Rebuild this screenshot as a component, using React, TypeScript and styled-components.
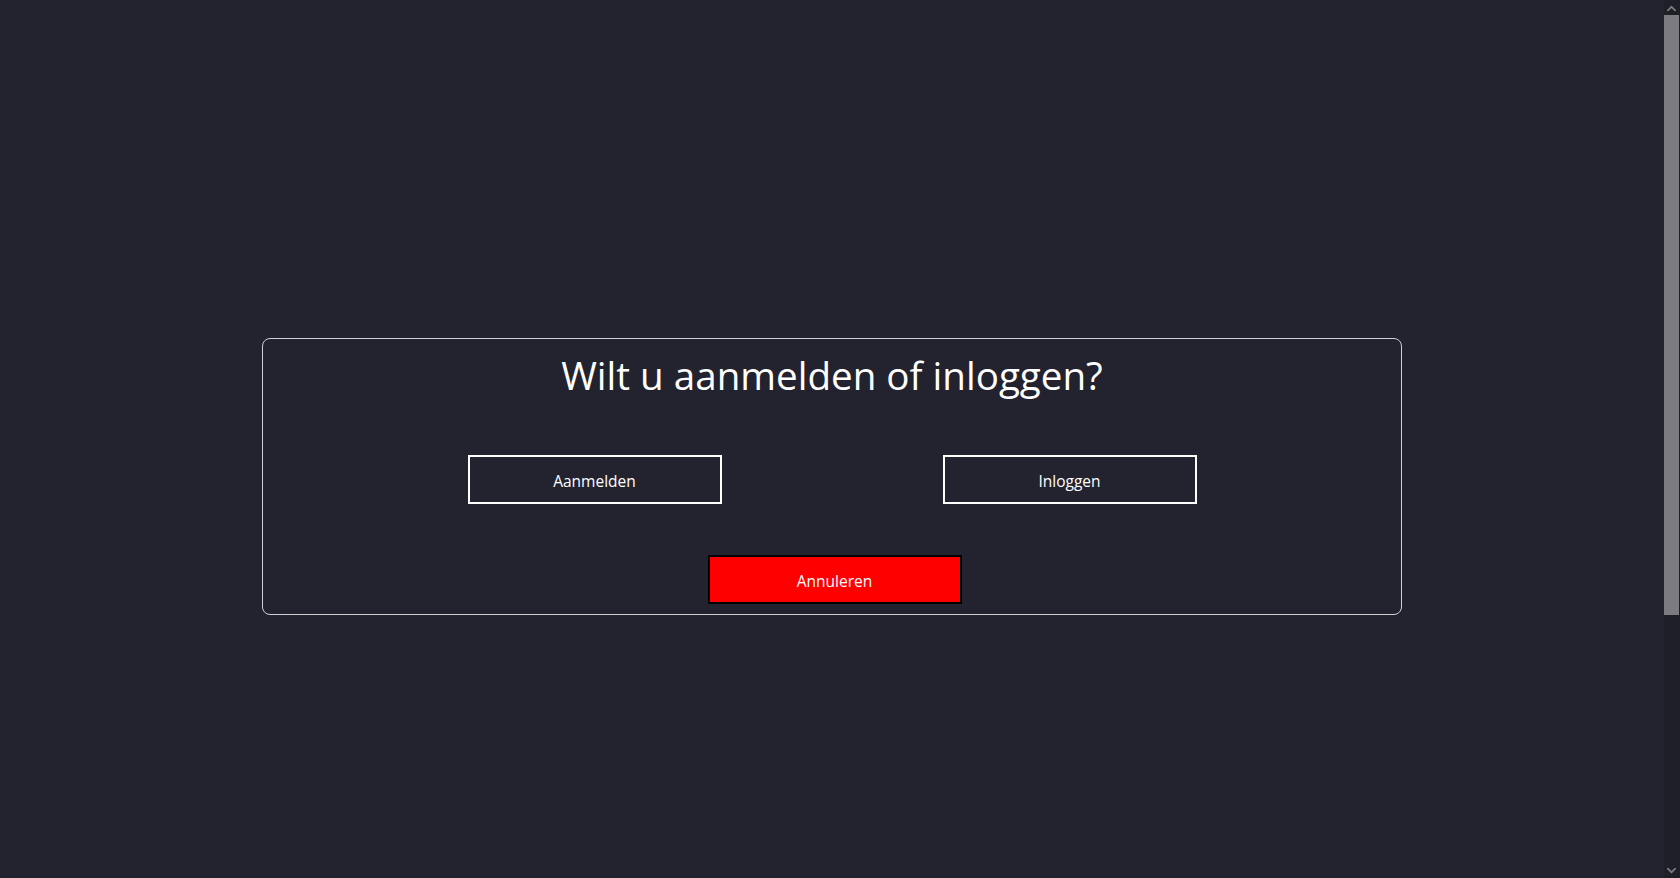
import React from "react";
import styled, { createGlobalStyle } from "styled-components";

const GlobalStyle = createGlobalStyle`
  html, body {
    margin: 0;
    padding: 0;
    height: 100%;
    overflow: hidden;
    background: #232330;
  }
  body {
    font-family: "Open Sans", "Noto Sans", "Liberation Sans", sans-serif;
    color: #ffffff;
  }
  #root { height: 100%; }
  * { box-sizing: border-box; }
`;

const Frame = styled.div`
  display: flex;
  height: 100%;
`;

const Viewport = styled.div`
  flex: 1;
  overflow: hidden;
`;

const Page = styled.main`
  min-height: 1240px;
  padding-top: 338px;
  display: flex;
  flex-direction: column;
  align-items: center;
`;

const Card = styled.section`
  width: 1140px;
  height: 277px;
  border: 1px solid #d0d0d4;
  border-radius: 8px;
  display: flex;
  flex-direction: column;
  align-items: center;
`;

const Title = styled.h1`
  margin: 12px 0 0;
  font-size: 38.6px;
  font-weight: 400;
  line-height: 48px;
  color: #ffffff;
`;

const ChoiceRow = styled.div`
  display: flex;
  justify-content: center;
  gap: 221px;
  margin-top: 56px;
`;

const Button = styled.button<{ $variant?: "outline" | "danger" }>`
  width: 254px;
  height: 49px;
  font-family: inherit;
  font-size: 15.5px;
  color: #ffffff;
  cursor: pointer;
  border: 2px solid ${(p) => (p.$variant === "danger" ? "#000000" : "#ffffff")};
  background: ${(p) => (p.$variant === "danger" ? "#ff0000" : "transparent")};
  padding: 3px 0 0;
`;

const CancelRow = styled.div`
  margin-top: 51px;
  margin-left: 5px;
`;

const ScrollTrack = styled.aside`
  width: 16px;
  display: flex;
  flex-direction: column;
  background: #1f1f28;
`;

const ScrollArrow = styled.div`
  height: 15px;
  display: flex;
  align-items: center;
  justify-content: center;
  padding-right: 1px;
  background: #1f1f28;
`;

const ScrollThumb = styled.div`
  height: 600px;
  margin-right: 1px;
  background: #7b7b81;
`;

const ScrollSpace = styled.div`
  flex: 1;
`;

const Chevron = ({ down }: { down?: boolean }) => (
  <svg width="9" height="6" viewBox="0 0 9 6" style={{ transform: down ? "rotate(180deg)" : undefined }}>
    <path d="M0 5 L4.5 0.5 L9 5 L9 6 L7.5 6 L4.5 3 L1.5 6 L0 6 Z" fill="#7b7b81" />
  </svg>
);

export default function App() {
  return (
    <>
      <GlobalStyle />
      <Frame>
        <Viewport>
          <Page>
            <Card>
              <Title>Wilt u aanmelden of inloggen?</Title>
              <ChoiceRow>
                <Button $variant="outline">Aanmelden</Button>
                <Button $variant="outline">Inloggen</Button>
              </ChoiceRow>
              <CancelRow>
                <Button $variant="danger">Annuleren</Button>
              </CancelRow>
            </Card>
          </Page>
        </Viewport>
        <ScrollTrack>
          <ScrollArrow>
            <Chevron />
          </ScrollArrow>
          <ScrollThumb />
          <ScrollSpace />
          <ScrollArrow>
            <Chevron down />
          </ScrollArrow>
        </ScrollTrack>
      </Frame>
    </>
  );
}
